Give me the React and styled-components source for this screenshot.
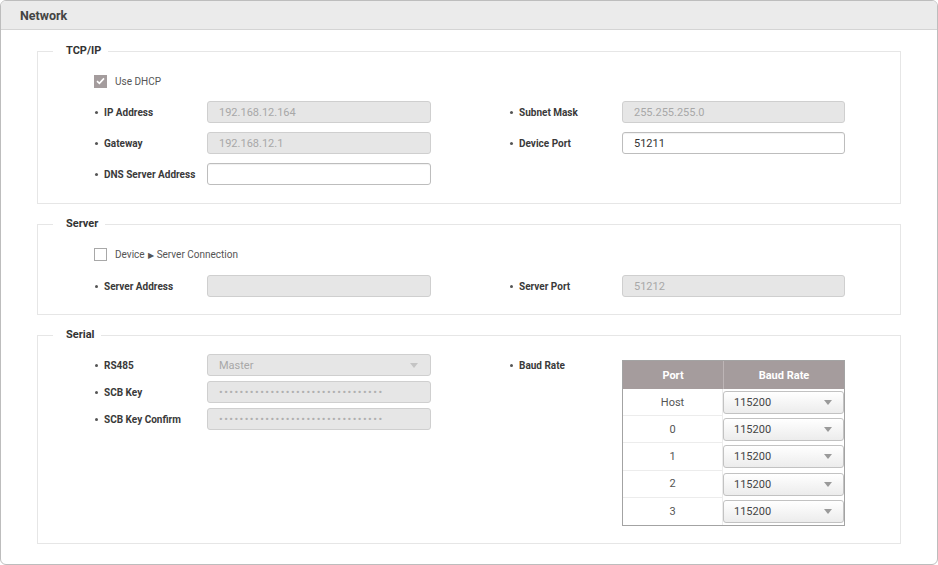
import React from "react";
import styled, { createGlobalStyle } from "styled-components";

const Global = createGlobalStyle`
  html, body { margin: 0; padding: 0; background: #fff; }
  body { font-family: Roboto, "Noto Sans", "Liberation Sans", sans-serif; color: #333; }
  * { box-sizing: border-box; }
`;

const Frame = styled.div`
  width: 938px;
  height: 565px;
  border: 1px solid #bdbdbd;
  border-radius: 6px;
  overflow: hidden;
  background: #fff;
  display: flex;
  flex-direction: column;
`;

const Header = styled.div`
  height: 29px;
  flex: none;
  background: #ebebeb;
  border-bottom: 1px solid #d4d4d4;
  display: flex;
  align-items: center;
  padding-left: 19px;
  font-size: 12.5px;
  font-weight: 700;
  color: #444;
`;

const Body = styled.div`
  padding: 13px 36px 0 36px;
  display: flex;
  flex-direction: column;
  gap: 12px;
`;

const Section = styled.fieldset`
  margin: 0;
  border: 1px solid #e6e6e6;
  padding: 0;
  min-width: 0;
`;

const Legend = styled.legend`
  margin-left: 15px;
  padding: 0 7px 0 13px;
  font-size: 11px;
  line-height: 16px;
  font-weight: 700;
  color: #333;
`;

const Content = styled.div`
  padding: 11px 55px ${(p) => p.$bottom || 18}px 56px;
`;

const Grid = styled.div`
  display: grid;
  grid-template-columns: 337px 336px;
  column-gap: 78px;
  row-gap: ${(p) => p.$gap}px;
  align-items: start;
`;

const Column = styled.div`
  display: flex;
  flex-direction: column;
  gap: ${(p) => p.$gap}px;
`;

const Field = styled.div`
  display: flex;
  align-items: center;
  height: 22px;
`;

const Label = styled.div`
  width: 113px;
  flex: none;
  font-size: 10px;
  font-weight: 700;
  color: #3a3a3a;
  display: flex;
  align-items: center;
  &::before {
    content: "";
    width: 3px;
    height: 3px;
    border-radius: 50%;
    background: #555;
    margin: 0 6px 0 1px;
  }
`;

const Input = styled.div`
  flex: 1;
  height: 22px;
  border: 1px solid ${(p) => (p.$disabled ? "#cfcfcf" : "#bdbdbd")};
  background: ${(p) => (p.$disabled ? "#e6e6e6" : "#fff")};
  border-radius: 3px;
  box-shadow: ${(p) => (p.$disabled ? "none" : "inset 0 1px 1px rgba(0,0,0,0.06)")};
  display: flex;
  align-items: center;
  justify-content: space-between;
  padding: 0 12px 0 11px;
  font-size: 11px;
  color: ${(p) => (p.$disabled ? "#a8a8a8" : "#333")};
`;

const Dots = styled.span`
  font-size: 11px;
  letter-spacing: 1.43px;
  color: #b0b0b0;
`;

const Arrow = styled.span`
  width: 0;
  height: 0;
  border-left: 4px solid transparent;
  border-right: 4px solid transparent;
  border-top: 5px solid ${(p) => p.$color || "#c4c4c4"};
`;

const CheckRow = styled.div`
  display: flex;
  align-items: center;
  height: 22px;
  gap: 8px;
  font-size: 10px;
  color: #555;
`;

const Tri = styled.span`
  font-size: 8px;
  margin: 0 3px;
  color: #555;
`;

const Box = styled.span`
  width: 13px;
  height: 13px;
  flex: none;
  border: 1px solid ${(p) => (p.$checked ? "#a49c9d" : "#a8a8a8")};
  background: ${(p) => (p.$checked ? "#a49c9d" : "#fff")};
  display: flex;
  align-items: center;
  justify-content: center;
`;

const BaudCol = styled.div`
  display: flex;
  align-items: flex-start;
`;

const BaudLabel = styled(Label)`
  height: 22px;
`;

const Table = styled.div`
  margin-top: 6px;
  flex: 1;
  border: 1px solid #a3a3a3;
  display: grid;
  grid-template-columns: 100px 1fr;
`;

const Th = styled.div`
  height: 28px;
  background: #a59c9d;
  color: #fff;
  font-size: 11px;
  font-weight: 700;
  display: flex;
  align-items: center;
  justify-content: center;
  border-left: ${(p) => (p.$divider ? "1px solid #bdb5b6" : "none")};
`;

const Td = styled.div`
  height: 27.2px;
  font-size: 11px;
  color: #555;
  display: flex;
  align-items: center;
  justify-content: center;
  border-bottom: ${(p) => (p.$last ? "none" : "1px solid #ececec")};
  border-right: 1px solid #ececec;
`;

const SelCell = styled.div`
  height: 27.2px;
  display: flex;
  align-items: center;
`;

const Select = styled.div`
  width: 100%;
  height: 23px;
  border: 1px solid #c2c2c2;
  border-radius: 3px;
  background: linear-gradient(#ffffff, #ececec);
  display: flex;
  align-items: center;
  justify-content: space-between;
  padding: 0 11px 0 10px;
  font-size: 11px;
  color: #444;
`;

const Check = () => (
  <svg width="9" height="8" viewBox="0 0 9 8">
    <path d="M1 4.2 L3.4 6.4 L8 1.4" fill="none" stroke="#fff" strokeWidth="1.6" />
  </svg>
);

const ports = ["Host", "0", "1", "2", "3"];
const mask = "••••••••••••••••••••••••••••••••";

export default function App() {
  return (
    <>
      <Global />
      <Frame>
        <Header>Network</Header>
        <Body>
          <Section>
            <Legend>TCP/IP</Legend>
            <Content>
              <Grid $gap={9}>
                <CheckRow>
                  <Box $checked>
                    <Check />
                  </Box>
                  Use DHCP
                </CheckRow>
                <div />
                <Field>
                  <Label>IP Address</Label>
                  <Input $disabled>192.168.12.164</Input>
                </Field>
                <Field>
                  <Label>Subnet Mask</Label>
                  <Input $disabled>255.255.255.0</Input>
                </Field>
                <Field>
                  <Label>Gateway</Label>
                  <Input $disabled>192.168.12.1</Input>
                </Field>
                <Field>
                  <Label>Device Port</Label>
                  <Input>51211</Input>
                </Field>
                <Field>
                  <Label>DNS Server Address</Label>
                  <Input />
                </Field>
              </Grid>
            </Content>
          </Section>

          <Section>
            <Legend>Server</Legend>
            <Content $bottom={17}>
              <Grid $gap={10}>
                <CheckRow>
                  <Box />
                  <span>
                    Device<Tri>▶</Tri>Server Connection
                  </span>
                </CheckRow>
                <div />
                <Field>
                  <Label>Server Address</Label>
                  <Input $disabled />
                </Field>
                <Field>
                  <Label>Server Port</Label>
                  <Input $disabled>51212</Input>
                </Field>
              </Grid>
            </Content>
          </Section>

          <Section>
            <Legend>Serial</Legend>
            <Content $bottom={17}>
              <Grid $gap={0}>
                <Column $gap={5}>
                  <Field>
                    <Label>RS485</Label>
                    <Input $disabled>
                      Master
                      <Arrow />
                    </Input>
                  </Field>
                  <Field>
                    <Label>SCB Key</Label>
                    <Input $disabled>
                      <Dots>{mask}</Dots>
                    </Input>
                  </Field>
                  <Field>
                    <Label>SCB Key Confirm</Label>
                    <Input $disabled>
                      <Dots>{mask}</Dots>
                    </Input>
                  </Field>
                </Column>
                <BaudCol>
                  <BaudLabel>Baud Rate</BaudLabel>
                  <Table>
                    <Th>Port</Th>
                    <Th $divider>Baud Rate</Th>
                    {ports.map((p, i) => (
                      <React.Fragment key={p}>
                        <Td $last={i === ports.length - 1}>{p}</Td>
                        <SelCell>
                          <Select>
                            115200
                            <Arrow $color="#9a9a9a" />
                          </Select>
                        </SelCell>
                      </React.Fragment>
                    ))}
                  </Table>
                </BaudCol>
              </Grid>
            </Content>
          </Section>
        </Body>
      </Frame>
    </>
  );
}
